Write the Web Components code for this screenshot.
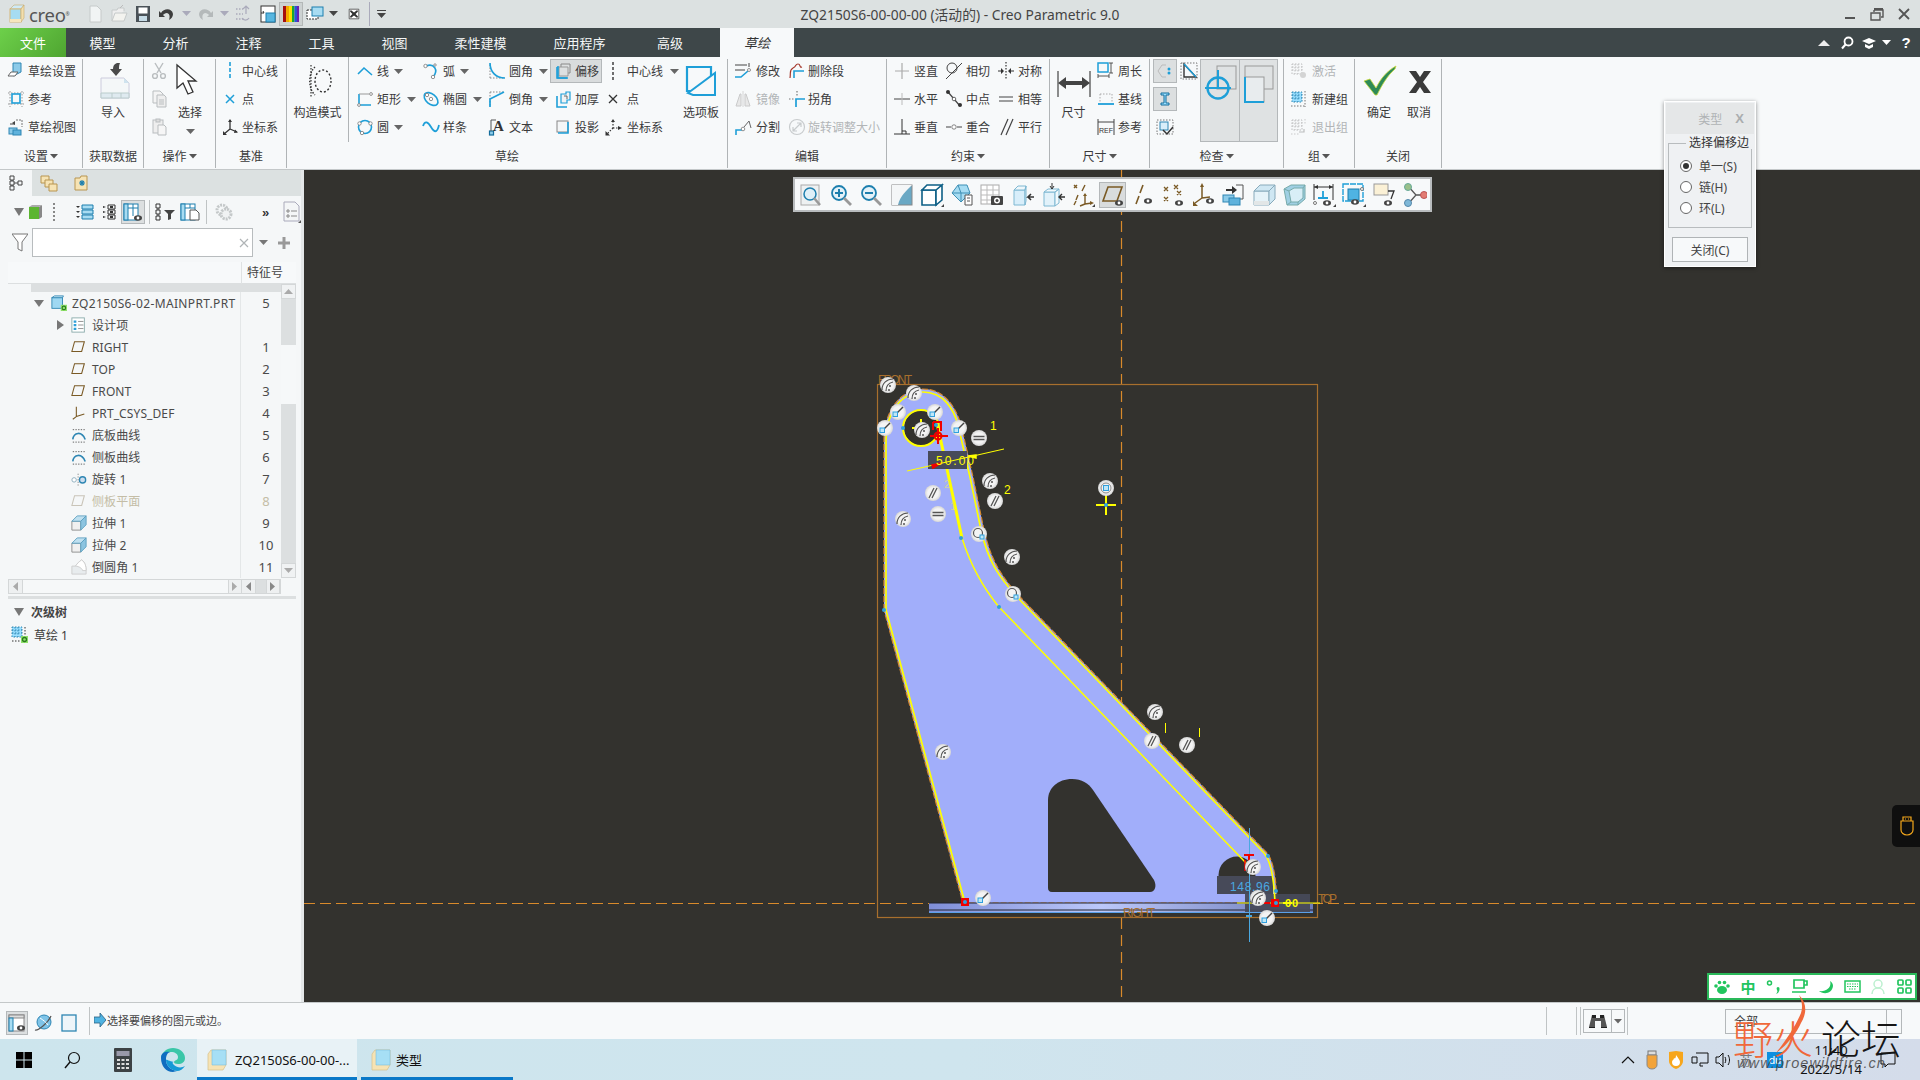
<!DOCTYPE html>
<html>
<head>
<meta charset="utf-8">
<style>
html, body { margin: 0; padding: 0; background: #33322e; }
</style>
</head>
<body>
<creo-window>
	<title-bar></title-bar>
	<ribbon-tabs></ribbon-tabs>
	<ribbon-bar>
		<ribbon-group label="设置" caret w="83">
			<rb-col w="82" p="7">
				<rb-item i="setup">草绘设置</rb-item>
				<rb-item i="ref">参考</rb-item>
				<rb-item i="view">草绘视图</rb-item>
			</rb-col>
		</ribbon-group>
		<ribbon-group label="获取数据" w="61">
			<rb-big i="import" s="36">导入</rb-big>
		</ribbon-group>
		<ribbon-group label="操作" caret w="72">
			<rb-col w="24" p="6">
				<rb-item i="cut"></rb-item>
				<rb-item i="copy"></rb-item>
				<rb-item i="paste"></rb-item>
			</rb-col>
			<rb-big i="cursor" s="34" w="44" caret>选择</rb-big>
		</ribbon-group>
		<ribbon-group label="基准" w="71">
			<rb-col w="70" p="5">
				<rb-item i="cline">中心线</rb-item>
				<rb-item i="cpoint">点</rb-item>
				<rb-item i="csys">坐标系</rb-item>
			</rb-col>
		</ribbon-group>
		<ribbon-group label="草绘" w="441">
			<rb-big i="construct" s="36" w="62" line>构造模式</rb-big>
			<rb-col w="73" p="7">
				<rb-item i="line" drop="5">线</rb-item>
				<rb-item i="rect" drop="6">矩形</rb-item>
				<rb-item i="circle" drop="5">圆</rb-item>
			</rb-col>
			<rb-col w="66" p="0">
				<rb-item i="arc" drop="5">弧</rb-item>
				<rb-item i="ellipse" drop="6">椭圆</rb-item>
				<rb-item i="spline">样条</rb-item>
			</rb-col>
			<rb-col w="62" p="0">
				<rb-item i="fillet" drop="6" g="3">圆角</rb-item>
				<rb-item i="chamfer" drop="6" g="3">倒角</rb-item>
				<rb-item i="text" g="3">文本</rb-item>
			</rb-col>
			<rb-col w="54" p="4">
				<rb-item i="offset" on g="3">偏移</rb-item>
				<rb-item i="thick" g="3">加厚</rb-item>
				<rb-item i="project" g="3">投影</rb-item>
			</rb-col>
			<rb-col w="72" p="0">
				<rb-item i="vdash" g="5" drop="5">中心线</rb-item>
				<rb-item i="xdark" g="5">点</rb-item>
				<rb-item i="csysd" g="5">坐标系</rb-item>
			</rb-col>
			<rb-big i="palette" s="36" w="50">选项板</rb-big>
		</ribbon-group>
		<ribbon-group label="编辑" w="159">
			<rb-col w="60" p="6">
				<rb-item i="modify" g="4">修改</rb-item>
				<rb-item i="mirror" g="4" off>镜像</rb-item>
				<rb-item i="divide" g="4">分割</rb-item>
			</rb-col>
			<rb-col w="99" p="0">
				<rb-item i="delseg" g="2">删除段</rb-item>
				<rb-item i="corner" g="2">拐角</rb-item>
				<rb-item i="rotate" g="2" off>旋转调整大小</rb-item>
			</rb-col>
		</ribbon-group>
		<ribbon-group label="约束" caret w="163">
			<rb-col w="52" p="6" >
				<rb-item i="cvert" g="3">竖直</rb-item>
				<rb-item i="chor" g="3">水平</rb-item>
				<rb-item i="cperp" g="3">垂直</rb-item>
			</rb-col>
			<rb-col w="52" p="6">
				<rb-item i="ctan" g="3">相切</rb-item>
				<rb-item i="cmid" g="3">中点</rb-item>
				<rb-item i="ccoin" g="3">重合</rb-item>
			</rb-col>
			<rb-col w="58" p="6">
				<rb-item i="csym" g="3">对称</rb-item>
				<rb-item i="ceq" g="3">相等</rb-item>
				<rb-item i="cpar" g="3">平行</rb-item>
			</rb-col>
		</ribbon-group>
		<ribbon-group label="尺寸" caret w="100">
			<rb-big i="dim" s="36" w="47">尺寸</rb-big>
			<rb-col w="52" p="0">
				<rb-item i="perim" g="3">周长</rb-item>
				<rb-item i="base" g="3">基线</rb-item>
				<rb-item i="refdim" g="3">参考</rb-item>
			</rb-col>
		</ribbon-group>
		<ribbon-group label="检查" caret w="134">
			<inspect-tools></inspect-tools>
		</ribbon-group>
		<ribbon-group label="组" caret w="71">
			<rb-col w="70" p="6">
				<rb-item i="gact" g="4" off>激活</rb-item>
				<rb-item i="gnew" g="4">新建组</rb-item>
				<rb-item i="gexit" g="4" off>退出组</rb-item>
			</rb-col>
		</ribbon-group>
		<ribbon-group label="关闭" w="87" pad="4">
			<rb-big i="ok" s="34" w="40">确定</rb-big>
			<rb-big i="cancel" s="34" w="40">取消</rb-big>
		</ribbon-group>
	</ribbon-bar>
	<main-area>
		<model-tree></model-tree>
		<graphics-view></graphics-view>
	</main-area>
	<status-bar></status-bar>
	<task-bar></task-bar>
	<select-dialog></select-dialog>
	<ime-bar></ime-bar>
	<forum-mark></forum-mark>
</creo-window>

<script>
const FONT = `'Noto Sans','Noto Sans CJK SC','Liberation Sans',sans-serif`;
const B = '#1e9fd8', K = '#4a4a4a', G = '#b9bdbf', R = '#7a5a25';
const ln = (d, c = B, w = 1.4) => `<path d="${d}" fill="none" stroke="${c}" stroke-width="${w}"/>`;
const dash = (d, c = '#555', w = 1) => `<path d="${d}" fill="none" stroke="${c}" stroke-width="${w}" stroke-dasharray="1.5 1.5"/>`;
const dot = (x, y, r = 1.4, c = '#777') => `<circle cx="${x}" cy="${y}" r="${r}" fill="#fff" stroke="${c}" stroke-width=".8"/>`;
const eye = (x, y) => `<ellipse cx="${x}" cy="${y}" rx="4" ry="2.8" fill="#444"/><circle cx="${x}" cy="${y}" r="1.4" fill="#fff"/>`;

// every icon, viewBox is set by its size group: v = 18 unless listed in BIG
const ICONS = {
	setup: `<path d="M6 1h8v9l-8 4z" fill="#8ccbe9" stroke="#2e86b3"/><path d="M1 14l3-4h7l-3 4z" fill="#fff" stroke="#666"/>`,
	ref: dash('M3 1v16M15 1v16M1 3h16M1 14h16', '#999') + `<rect x="5" y="4" width="8" height="9" fill="none" stroke="${B}" stroke-width="1.6"/>`,
	view: `<path d="M9 2h6v7" fill="none" stroke="#777" stroke-dasharray="2 1"/><path d="M8 3l-3 2 3 2z" fill="#444"/><path d="M3 6l5 0" stroke="#444"/><rect x="2" y="10" width="8" height="6" fill="#8ccbe9" stroke="#2e86b3"/><rect x="6" y="12" width="8" height="5" fill="#5fb2dc" stroke="#2e86b3"/>`,
	cut: ln('M5 1l6 10M13 1l-6 10', G, 1.4) + `<circle cx="5" cy="14" r="2.4" fill="none" stroke="${G}" stroke-width="1.4"/><circle cx="13" cy="14" r="2.4" fill="none" stroke="${G}" stroke-width="1.4"/>`,
	copy: `<path d="M3 1h7l3 3v9H3z" fill="#f4f4f4" stroke="${G}"/><path d="M7 5h7l2 2v10H7z" fill="#eee" stroke="${G}"/>` + ln('M9 10h5M9 12h5M9 14h5', G, 1),
	paste: `<rect x="3" y="2" width="10" height="13" fill="#eee" stroke="${G}"/><rect x="6" y="1" width="4" height="3" fill="#ddd" stroke="${G}"/><path d="M8 7h6l2 2v8H8z" fill="#f6f6f6" stroke="${G}"/>`,
	cline: `<path d="M9 0v18" stroke="${B}" stroke-width="1.6" stroke-dasharray="4 2"/>`,
	cpoint: ln('M5 5l8 8M13 5l-8 8', B, 1.5),
	csys: ln('M9 2v9M9 11l7 3M9 11l-6 5', '#333', 1.3) + `<path d="M7 4l2-3 2 3zM14 11.5l3 3-4 .5zM2 13v4h4z" fill="#333"/>`,
	line: ln('M2 12l6-6 8 7', B, 1.6),
	rect: ln('M3 4v11h12', B, 1.6) + ln('M3 4h10', '#999', 1) + dot(15, 4) + dot(3, 15),
	circle: `<circle cx="9" cy="9" r="6.5" fill="none" stroke="${B}" stroke-width="1.6"/>` + dot(3.5, 5.5, 1.7) + dot(14.5, 5.5, 1.7) + dot(6, 15, 1.7),
	arc: ln('M4 4C12 1 17 8 11 15', B, 1.6) + dot(3.5, 4, 1.7) + dot(11, 15, 1.7) + dot(13, 3, 1.2),
	ellipse: `<ellipse cx="9" cy="9" rx="8" ry="5" transform="rotate(40 9 9)" fill="none" stroke="${B}" stroke-width="1.6"/>` + dot(5, 5, 1.7) + dot(9, 9, 1.7),
	spline: ln('M1 8C3 2 6 4 9 9S15 16 17 7', B, 1.8),
	fillet: dash('M2 16h14M2 16V2', '#888') + ln('M2 1C2 10 8 16 17 16', B, 1.7),
	chamfer: dash('M2 2h14M2 2v14', '#888') + ln('M2 17V9L16 2', B, 1.7),
	text: `<rect x="1.5" y="13" width="4" height="4" fill="#8ccbe9" stroke="#136d9c" stroke-width="1.2"/>` + ln('M3 2h5M3 2v11', '#555', 1) + `<text x="5" y="13" font-family="Liberation Serif" font-weight="bold" font-size="15" fill="#333">A</text>`,
	offset: ln('M3 5v11h10', B, 1.6) + `<path d="M7 2h9v9H7z" fill="#dde0e1" stroke="#888"/><path d="M5 5h9v9H5z" fill="#dde0e1" stroke="#999"/>` + ln('M4 4v12h10', B, 1.6),
	thick: ln('M3 6v11h10', B, 1.6) + `<path d="M7 4h5V2h4v8h-3v3H7z" fill="#f0f3f4" stroke="${B}" stroke-width="1.2"/>` + ln('M10 6h3v3', '#666', 1),
	project: `<rect x="3" y="3" width="11" height="11" fill="#f4f6f7" stroke="#888"/>` + ln('M14 4v11H4', B, 1.6),
	vdash: `<path d="M9 0v18" stroke="#333" stroke-width="1.4" stroke-dasharray="3 2"/>`,
	xdark: ln('M5 5l8 8M13 5l-8 8', '#333', 1.3),
	csysd: dash('M9 3v7M9 10h7M9 10l-6 6', '#333', 1.2) + `<path d="M7 4l2-3 2 3zM14 8l4 2-4 2zM1.500 13v4.500H6z" fill="#333"/>`,
	modify: ln('M1 3h12M15 1v4M1 8h10', '#444', 1) + ln('M1 15h6L14 9', B, 1.6) + dot(15, 8, 1.5),
	mirror: ln('M9 1v16', '#ccc', 1) + `<path d="M6 4l-4 12h5V4zM12 4l4 12h-5V4z" fill="#e3e3e3" stroke="#bbb"/>`,
	divide: ln('M2 17v-5h6', B, 1.6) + ln('M10 9l5-6 2 7', '#666', 1) + dot(9, 11, 1.8),
	delseg: ln('M6 16V9h10', B, 1.6) + ln('M2 16C3 10 1 8 5 6s2-4 5-4 1 4 4 3', '#a5382c', 1.2),
	corner: ln('M8 17V9h9', B, 1.7) + dash('M9 1v6M1 9h6', '#777', 1.2),
	rotate: `<circle cx="9" cy="9" r="7.5" fill="none" stroke="${G}" stroke-width="1.2"/>` + ln('M5 13l8-8M5 9v4h4M9 5h4v4', G, 1.2),
	cvert: ln('M9 1v16', '#aaa', 1.2) + ln('M2 9h14', '#aaa', 1),
	chor: ln('M1 9h16', '#444', 1) + ln('M9 3v12', '#bbb', 1),
	cperp: ln('M1 16h16M9 1v15', '#333', 1) + ln('M9 13h4v3', '#333', 1),
	ctan: `<circle cx="7" cy="6" r="5" fill="none" stroke="#444"/>` + ln('M1 17L17 1', '#444', 1),
	cmid: ln('M3 2l12 14', '#444', 1.2) + `<circle cx="3" cy="2" r="2" fill="#333"/><circle cx="15" cy="15" r="2" fill="#333"/>` + dot(9, 9, 1.8, '#444'),
	ccoin: ln('M1 9h5M12 9h5', '#444', 1.2) + dot(9, 9, 2.2, '#666'),
	csym: dash('M9 0v18', '#333', 1.2) + `<path d="M1 9h4M13 9h4" stroke="#333"/><path d="M4 6l3 3-3 3zM14 6l-3 3 3 3z" fill="#333"/>`,
	ceq: ln('M2 7h14M2 11h14', '#444', 1.2),
	cpar: ln('M4 17L11 1M9 17L16 1', '#444', 1.2),
	perim: `<rect x="1" y="1" width="10" height="9" fill="none" stroke="${B}" stroke-width="1.5"/>` + ln('M14 1v10M12 1h4M12 11h4M1 14h11M1 12v4M12 12v4', '#444', .9),
	base: dash('M3 4h12M3 4v9M15 4v9', '#aaa') + ln('M1 14h16', B, 1.8),
	refdim: ln('M1 1v16M17 1v16M1 4h16', '#444', 1) + `<text x="2" y="15" font-family="Liberation Sans" font-size="7" fill="#333">REF</text>`,
	gact: dash('M2 2h10v10H2zM2 5h10M2 8h10M5 2v10M8 2v10', '#aaa') + `<circle cx="13" cy="13" r="3" fill="#c8c8c8"/>`,
	gnew: `<rect x="2" y="2" width="10" height="10" fill="#9adfff"/>` + dash('M2 2h10v10H2zM2 5h10M2 8h10M5 2v10M8 2v10', '#2e86b3') + dash('M15 1v16M1 16h14', '#777'),
	gexit: dash('M2 2h10v10H2zM2 5h10M2 8h10M5 2v10M8 2v10', '#aaa') + ln('M9 14h5v-3', '#aaa', 1.2) + dash('M15 1v6M1 16h8', '#bbb'),
	// big ribbon icons
	import: `<path d="M6 15h23l5 5v15H6z" fill="#f4f7f8" stroke="#ccd"/><path d="M29 15l5 5h-5z" fill="#cfe3ee"/><path d="M6 35v-5h28v5z" fill="#dfeaf0" stroke="#bcc"/><path d="M17 30v5M26 30v5" stroke="#bcc"/><path d="M22 0c-3 1-4 3-4 6h-3l6 7 6-7h-3c0-2 0-4 1-6z" fill="#4a4a4a"/>`,
	cursor: `<path d="M4 1l0 23 6-5 5 11 5-2-5-11h8z" fill="#fff" stroke="#333" stroke-width="1.300"/>`,
	construct: dash('M15 4C8 10 8 26 15 32', '#333', 1.4) + dash('M11 2v32', '#333', 1.2) + `<ellipse cx="23" cy="18" rx="8" ry="11" fill="none" stroke="#333" stroke-width="1.400" stroke-dasharray="2 2"/>`,
	palette: ln('M4 4h24v24H4z', B, 2.2) + `<path d="M5 30L32 10v22H10z" fill="#f7f9fa" stroke="${B}" stroke-width="2"/>`,
	dim: ln('M2 8v26M34 8v26', '#444', 1.2) + `<path d="M2 20l8-6v4h16v-4l8 6-8 6v-4H10v4z" fill="#444"/>`,
	ok: `<path d="M2 17l6-2 6 9C19 14 25 7 34 2l-1 3C25 12 20 21 15 31h-2z" fill="#2e8b57" stroke="#c9d93a" stroke-width=".8"/>`,
	cancel: `<path d="M7 7h7l4 6 4-6h7l-8 11 8 11h-7l-4-6-4 6H7l8-11z" fill="#3a3a3a"/>`,
	// tree icons
	plane: ln('M4 3h11l-3 11H1z', R, 1.2),
	planed: ln('M4 3h11l-3 11H1z', '#c9c4b8', 1.2),
	tcsys: ln('M6 2v11M6 13l9-3M6 13l-4 3', R, 1.2),
	curve: ln('M2 14C3 6 12 4 16 14', '#2e86b3', 1.8) + dash('M2 3h14M2 17h14', '#555'),
	revolve: `<circle cx="3.500" cy="10" r="2.500" fill="#fff" stroke="#8ab"/><circle cx="13" cy="10" r="3.500" fill="#cde" stroke="#2e86b3" stroke-width="1.500"/>` + dash('M8 3v14', '#888'),
	extrude: `<path d="M1 7h10v10H1z" fill="#f0f0f0" stroke="#888"/><path d="M1 7l6-6h10L11 7z" fill="#bfe0f0" stroke="#5a9fc0"/><path d="M11 7l6-6v10l-6 6z" fill="#8cc4e0" stroke="#5a9fc0"/>`,
	tround: `<path d="M1 17V8h4C7 5 9 3 12 1c4 3 5 7 5 12v4z" fill="#e8ecee" stroke="#ccc"/><path d="M5 8c2-3 4-5 7-7 4 3 5 7 5 12h-4C13 11 9 8 5 8z" fill="#fff" stroke="#ccc"/>`,
	items: `<rect x="1" y="1" width="14" height="16" fill="#fff" stroke="#8aa"/><path d="M3 4h3v2.500H3zM3 8h3v2.500H3zM3 12h3v2.500H3z" fill="#2e9fd8"/>` + ln('M8 5h6M8 9h6M8 13h6', '#888', 1),
	part: `<rect x="1" y="3" width="12" height="12" fill="#9fd8f2" stroke="#2e86b3"/><path d="M1 3l3-2h10l-1 2z" fill="#cfeaf7" stroke="#2e86b3"/><rect x="11" y="11" width="7" height="7" fill="#8fe06a"/><circle cx="14.500" cy="14.500" r="2" fill="none" stroke="#2a7a20" stroke-width="1.300"/>`,
	sketch: `<rect x="1" y="1" width="10" height="10" fill="#9adfff"/>` + dash('M1 1h10v10H1zM1 4h10M1 7h10M4 1v10M7 1v10', '#2e86b3') + dash('M14 1v16M1 15h13', '#333') + `<rect x="10" y="10" width="7" height="7" fill="#8fe06a"/><circle cx="13.500" cy="13.500" r="2" fill="none" stroke="#2a7a20" stroke-width="1.300"/>`
};

class Ico extends HTMLElement {
	connectedCallback() {
		const n = this.getAttribute('n'), s = this.getAttribute('s') || 18, v = this.getAttribute('v') || s;
		this.attachShadow({ mode: 'open' }).innerHTML = `<style>:host{display:inline-flex;flex:none;width:${s}px;height:${s}px}svg{display:block;overflow:visible}</style><svg width="${s}" height="${s}" viewBox="0 0 ${v} ${v}">${ICONS[n] || ''}</svg>`;
	}
}
customElements.define('c-ico', Ico);

class CreoWindow extends HTMLElement {
	constructor() {
		super();
		this.attachShadow({ mode: 'open' }).innerHTML = `<style>
			:host { display: flex; flex-direction: column; position: relative; width: 1920px; height: 1080px; overflow: hidden; font: 12px ${FONT}; color: #3a3a3a; }
		</style><slot></slot>`;
	}
}

class TitleBar extends HTMLElement {
	constructor() {
		super();
		const q = (w, svg) => `<span class="q" style="width:${w}px">${svg}</span>`;
		const svg = (b, w = 20) => `<svg width="${w}" height="${w}" viewBox="0 0 20 20">${b}</svg>`;
		const drop = `<svg width="9" height="6" viewBox="0 0 9 6"><path d="M0 0h9L4.500 5z" fill="#aab"/></svg>`;
		const dropK = `<svg width="9" height="6" viewBox="0 0 9 6"><path d="M0 0h9L4.500 5z" fill="#444"/></svg>`;
		this.attachShadow({ mode: 'open' }).innerHTML = `<style>
			:host { display: grid; grid-template-columns: 1fr auto 1fr; align-items: center; height: 28px; background: #dce1e1; flex: none; }
			.left { display: flex; align-items: center; height: 28px; }
			.logo { display: flex; align-items: center; width: 83px; box-sizing: border-box; padding-left: 8px; gap: 3px; font: 18.500px 'Noto Sans',sans-serif; color: #555; letter-spacing: -.3px; }
			.logo sup { font-size: 5px; margin-left: -3px; }
			.q { display: flex; justify-content: center; align-items: center; height: 28px; flex: none; }
			.on { height: 24px; box-sizing: border-box; background: #cdd2d2; border: 1px solid #b4b8b8; }
			.sep { width: 1px; height: 24px; background: #aab; margin-left: 3px; }
			.title { font-size: 13.800px; color: #444; white-space: nowrap; }
			.win { display: flex; justify-content: flex-end; align-items: center; gap: 11px; padding-right: 8px; }
			.win svg { display: block; }
		</style>
		<div class="left">
			<span class="logo"><svg width="18" height="20" viewBox="0 0 18 20"><path d="M2 5l4-4h10l-3 4z" fill="#cfeaf7" stroke="#c8a86a" stroke-width=".6"/><rect x="2" y="5" width="11" height="13" fill="#a6dcf2" stroke="#d6b878"/><path d="M13 5l3-4v13l-3 4z" fill="#f2dfae" stroke="#c8a86a" stroke-width=".6"/><path d="M2 15h11v3H2z" fill="#f6e6bd"/></svg><span>creo</span><sup>®</sup></span>
			${q(24, svg(`<path d="M5 2h7l4 4v12H5z" fill="#f1f4f4" stroke="#c6caca"/>`))}
			${q(24, svg(`<path d="M3 17V6h5l1-2h6v3" fill="#eee" stroke="#c6caca"/><path d="M3 17l3-8h12l-3 8z" fill="#f3f3ef" stroke="#c6caca"/><path d="M11 4l3-3" stroke="#bbb"/>`))}
			${q(24, svg(`<path d="M3 2h14v16H3z" fill="#4a5258"/><rect x="5.500" y="3.500" width="9" height="6" fill="#fff"/><rect x="6" y="12" width="8" height="5" fill="#c6dbe6"/>`))}
			${q(24, svg(`<path d="M4 9C7 4 15 4 16 10c0 3-2 5-4 6 1-3 1-6-2-7-2 0-3 1-4 2l2 2H2V7z" fill="#3d3d3d"/>`))}
			${q(14, drop)}
			${q(24, svg(`<path d="M16 9C13 4 5 4 4 10c0 3 2 5 4 6-1-3-1-6 2-7 2 0 3 1 4 2l-2 2h6V7z" fill="#b4b9ba"/>`))}
			${q(14, drop)}
			${q(24, svg(dash('M3 5h7M3 10h7M3 15h8', '#aab', 1.500) + `<path d="M13 2v8M10 5l3-3 3 3M16 14a4 4 0 0 1-7 0" fill="none" stroke="#aab" stroke-width="1.200"/>`))}
			${q(24, svg(`<rect x="4" y="2" width="14" height="16" fill="#fff" stroke="#333"/><rect x="9" y="9" width="9" height="9" fill="#58b6e0" stroke="#1d7fae"/><path d="M4 9h3l-1-2" stroke="#333" fill="none"/>`))}
			<span class="q on" style="width:24px"><svg width="16" height="16" viewBox="0 0 16 16"><path d="M0 0h3v16H0z" fill="#a60f10"/><path d="M3 0h3v16H3z" fill="#f5a800"/><path d="M6 0h3v16H6z" fill="#ffe000"/><path d="M9 0h2.500v16H9z" fill="#1aa72e"/><path d="M11.500 0H14v16h-2.500z" fill="#2a52d8"/><path d="M14 0h2v16h-2z" fill="#6a1fb0"/></svg></span>
			${q(24, svg(`<rect x="2" y="6" width="11" height="9" fill="#fff" stroke="#333" stroke-dasharray="2 1"/><rect x="7" y="3" width="11" height="9" fill="#a8dcf2" stroke="#1d7fae"/>`))}
			${q(12, dropK)}
			<span style="width:3px"></span>
			${q(24, svg(`<path d="M4 4h12v12H4z" fill="#fff" stroke="#444"/><path d="M6 5l4 3 4-3 1 2-3 3 3 3-1 2-4-3-4 3-1-2 3-3-3-3z" fill="#333"/>`, 16))}
			<span class="sep"></span>
			${q(22, `<svg width="9" height="9" viewBox="0 0 9 9"><path d="M0 0h9v1H0zM0 3h9L4.500 8z" fill="#444"/></svg>`)}
		</div>
		<div class="title">ZQ2150S6-00-00-00 (活动的) - Creo Parametric 9.0</div>
		<div class="win">
			<svg width="16" height="14" viewBox="0 0 16 14"><path d="M3 10h10v2H3z" fill="#555"/></svg>
			<svg width="16" height="14" viewBox="0 0 16 14"><path d="M5 3h9v7h-2M2 6h9v7H2zM5 3v2" fill="none" stroke="#555" stroke-width="1.400"/><path d="M5 1h9v2H5z" fill="#555"/></svg>
			<svg width="16" height="14" viewBox="0 0 16 14"><path d="M3 2l10 10M13 2L3 12" stroke="#555" stroke-width="1.800"/></svg>
		</div>`;
	}
}

class RibbonTabs extends HTMLElement {
	constructor() {
		super();
		const tabs = [['文件', 66, 'file'], ['模型', 73], ['分析', 73], ['注释', 73], ['工具', 73], ['视图', 73], ['柔性建模', 99], ['应用程序', 99], ['高级', 82], ['', 9], ['草绘', 74, 'cur']];
		this.attachShadow({ mode: 'open' }).innerHTML = `<style>
			:host { display: flex; height: 29px; background: #3e4749; color: #f4f6f6; font-size: 13px; flex: none; }
			.t { display: flex; align-items: center; justify-content: center; flex: none; }
			.file { background: linear-gradient(135deg, #6dd04a, #4fa531); color: #fff; }
			.cur { background: #f7f9fa; color: #333; font-style: italic; }
			.r { margin-left: auto; display: flex; align-items: center; gap: 0; padding-right: 4px; }
			.r span { display: flex; justify-content: center; width: 23px; }
		</style>` + tabs.map(t => `<div class="t ${t[2] || ''}" style="width:${t[1]}px">${t[0]}</div>`).join('') + `
		<div class="r">
			<span><svg width="12" height="8" viewBox="0 0 12 8"><path d="M0 7l6-6 6 6z" fill="#eee"/></svg></span>
			<span><svg width="14" height="14" viewBox="0 0 14 14"><circle cx="8.500" cy="5.500" r="4" fill="none" stroke="#fff" stroke-width="1.800"/><path d="M5.500 8.500L2 12.500" stroke="#fff" stroke-width="2"/></svg></span>
			<span style="width:18px;justify-content:flex-end"><svg width="14" height="14" viewBox="0 0 14 14"><path d="M0 5l7-3 7 3-7 3z" fill="#fff"/><path d="M3 8v3l4 2 4-2V8L7 10z" fill="#fff"/></svg></span>
			<span style="width:20px"><svg width="9" height="6" viewBox="0 0 9 6"><path d="M0 0h9L4.500 5z" fill="#fff"/></svg></span>
			<span style="width:20px;font:bold 15px 'Liberation Sans';color:#fff">?</span>
		</div>`;
	}
}

class RibbonBar extends HTMLElement {
	constructor() {
		super();
		this.attachShadow({ mode: 'open' }).innerHTML = `<style>
			:host { display: flex; height: 113px; box-sizing: border-box; background: #f7f9fa; border-bottom: 1px solid #c4c8c9; flex: none; }
		</style><slot></slot>`;
	}
}

class RibbonGroup extends HTMLElement {
	connectedCallback() {
		const w = this.getAttribute('w'), pad = this.getAttribute('pad') || 0;
		const caret = this.hasAttribute('caret') ? `<svg width="8" height="5" viewBox="0 0 8 5" style="margin-left:2px"><path d="M0 0h8L4 4.500z" fill="#555"/></svg>` : '';
		this.attachShadow({ mode: 'open' }).innerHTML = `<style>
			:host { display: flex; flex-direction: column; flex: none; box-sizing: border-box; width: ${w}px; height: 109px; margin-top: 2px; border-right: 1px solid #b0b4b6; }
			.body { display: flex; height: 87px; margin-top: -2px; padding-left: ${pad}px; }
			.label { display: flex; align-items: center; justify-content: center; height: 24px; color: #3a3a3a; white-space: nowrap; }
		</style><div class="body"><slot></slot></div><div class="label">${this.getAttribute('label')}${caret}</div>`;
	}
}

class RbCol extends HTMLElement {
	connectedCallback() {
		this.attachShadow({ mode: 'open' }).innerHTML = `<style>
			:host { display: flex; flex-direction: column; flex: none; box-sizing: border-box; width: ${this.getAttribute('w')}px; padding-left: ${this.getAttribute('p') || 0}px; }
		</style><slot></slot>`;
	}
}

class RbItem extends HTMLElement {
	connectedCallback() {
		const off = this.hasAttribute('off'), on = this.hasAttribute('on'), drop = this.getAttribute('drop');
		const car = drop ? `<svg width="9" height="5" viewBox="0 0 9 5" style="margin-left:${drop - 3}px;flex:none"><path d="M0 0h9L4.500 5z" fill="#666"/></svg>` : '';
		this.attachShadow({ mode: 'open' }).innerHTML = `<style>
			:host { display: flex; align-items: center; height: 28px; gap: ${this.getAttribute('g') || 3}px; white-space: nowrap; color: ${off ? '#b2b5b7' : '#3a3a3a'}; position: relative; }
			.box { position: absolute; left: -4px; top: 2px; width: 52px; height: 24px; box-sizing: border-box; background: #d9dcdd; border: 1px solid #b4b8ba; }
			c-ico { position: relative; ${off ? 'opacity:.75;' : ''} }
			span { position: relative; }
		</style>${on ? '<div class="box"></div>' : ''}<c-ico n="${this.getAttribute('i')}"></c-ico><span><slot></slot></span>${car}`;
	}
}

class RbBig extends HTMLElement {
	connectedCallback() {
		const s = this.getAttribute('s') || 36, w = this.getAttribute('w') || 60;
		const border = this.hasAttribute('line') ? `.wrap{border-right:1px solid #b0b4b6;height:85px;box-sizing:border-box}` : '';
		const car = this.hasAttribute('caret') ? `<svg width="9" height="5" viewBox="0 0 9 5" style="margin-top:7px"><path d="M0 0h9L4.500 5z" fill="#666"/></svg>` : '';
		this.attachShadow({ mode: 'open' }).innerHTML = `<style>
			:host { display: block; flex: 1 0 ${w}px; max-width: ${this.getAttribute('w') ? w + 'px' : 'none'}; }
			.wrap { display: flex; flex-direction: column; align-items: center; white-space: nowrap; }
			.i { display: flex; align-items: center; justify-content: center; height: 47px; }
			.t { line-height: 18px; }
			${border}
		</style><div class="wrap"><div class="i"><c-ico n="${this.getAttribute('i')}" s="${s}"></c-ico></div><div class="t"><slot></slot></div>${car}</div>`;
	}
}

class InspectTools extends HTMLElement {
	constructor() {
		super();
		this.attachShadow({ mode: 'open' }).innerHTML = `<style>
			:host { display: flex; padding: 2px 0 0 3px; gap: 0; }
			.col { display: flex; flex-direction: column; gap: 4px; width: 24px; }
			.s { display: flex; align-items: center; justify-content: center; box-sizing: border-box; width: 24px; height: 24px; }
			.s.on { background: #dcdfe0; border: 1px solid #b4b8ba; }
			.c2 { width: 24px; margin-right: 0; }
			.c2 .s { height: 24px; }
			.tog { box-sizing: border-box; width: 40px; height: 83px; background: #dfe2e3; border: 1px solid #b4b8ba; margin-left: -1px; padding: 4px 0 0 3px; }
		</style>
		<div class="col">
			<div class="s on"><svg width="18" height="18" viewBox="0 0 18 18"><path d="M6 3l-4 6 4 6" fill="none" stroke="#bbb"/><path d="M6 3h4M6 15h4" stroke="#bbb"/><circle cx="13" cy="7" r="1.500" fill="${B}"/><circle cx="13" cy="11" r="1.500" fill="${B}"/></svg></div>
			<div class="s on"><svg width="18" height="18" viewBox="0 0 18 18"><path d="M5 3h8v2H10v8h3v2H5v-2h3V5H5z" fill="#9adfff" stroke="#136d9c"/></svg></div>
			<div class="s"><svg width="18" height="18" viewBox="0 0 18 18">${dash('M1 2h16v14H1z', '#777')}<rect x="4" y="4" width="8" height="8" fill="#d8eefa" stroke="#2e86b3"/><path d="M7 12l4 4 6-7" fill="none" stroke="#333" stroke-width="1.500"/></svg></div>
		</div>
		<div class="col c2">
			<div class="s"><svg width="18" height="18" viewBox="0 0 18 18">${dash('M1 1h16v16H1z', '#777')}<path d="M4 2v13h12z" fill="none" stroke="#333" stroke-width="1.400"/><path d="M4 2L16 15" stroke="#1e9fd8" stroke-width="1.400"/></svg></div>
		</div>
		<div class="tog"><svg width="34" height="40" viewBox="0 0 34 40"><rect x="13" y="2" width="19" height="23" fill="none" stroke="#999"/><circle cx="14" cy="24" r="10.500" fill="none" stroke="${B}" stroke-width="2.400"/><path d="M14 6v18M1 24h26" stroke="${B}" stroke-width="2"/></svg></div>
		<div class="tog" style="width:39px"><svg width="34" height="40" viewBox="0 0 34 40"><rect x="2" y="2" width="28" height="23" fill="none" stroke="#999"/><rect x="2" y="13" width="19" height="25" fill="#e8ecee" stroke="#999"/><path d="M2 13v25h19" fill="none" stroke="${B}" stroke-width="2"/></svg></div>`;
	}
}

class MainArea extends HTMLElement {
	constructor() {
		super();
		this.attachShadow({ mode: 'open' }).innerHTML = `<style>
			:host { display: flex; height: 832px; flex: none; }
		</style><slot></slot>`;
	}
}

class TreeRow extends HTMLElement {
	connectedCallback() {
		const lvl = +(this.getAttribute('lvl') || 1), dim = this.hasAttribute('dim'), arrow = this.getAttribute('arrow');
		const tri = arrow === 'down' ? `<path d="M1 3h10L6 10z" fill="#777"/>` : arrow === 'right' ? `<path d="M3 1v10l7-5z" fill="#777"/>` : '';
		this.attachShadow({ mode: 'open' }).innerHTML = `<style>
			:host { display: grid; grid-template-columns: 241px 40px; height: 22px; font-size: 12px; color: ${dim ? '#c4bda6' : '#4a4a4a'}; }
			.name { display: flex; align-items: center; padding-left: ${lvl ? 54 : 33}px; border-right: 1px solid #e4e7e8; box-sizing: border-box; white-space: nowrap; }
			.a { width: 12px; height: 12px; flex: none; margin-right: ${lvl ? 5 : 6}px; }
			.t { margin-left: 5px; letter-spacing: ${lvl ? .1 : .35}px; }
			.n { box-sizing: border-box; padding-left: 10px; text-align: center; line-height: 22px; font-size: 13px; }
		</style><div class="name"><svg class="a" viewBox="0 0 12 12">${tri}</svg><c-ico n="${this.getAttribute('i')}" s="16" v="18"></c-ico><span class="t"><slot></slot></span></div><div class="n">${this.getAttribute('n')}</div>`;
	}
}

class ModelTree extends HTMLElement {
	constructor() {
		super();
		this.attachShadow({ mode: 'open' }).innerHTML = `<style>
			:host { display: flex; flex-direction: column; width: 304px; box-sizing: border-box; border-right: 3px solid #e4e7e8; background: #f5f7f8; flex: none; height: 832px; position: relative; }
			.ptabs { display: flex; height: 26px; background: #dce1e1; flex: none; }
			.ptabs span { display: flex; align-items: center; justify-content: center; width: 32px; margin-right: 0; }
			.ptabs .cur { background: #f5f7f8; }
			.tools { display: flex; align-items: center; height: 32px; flex: none; padding-left: 13px; }
			.b { display: flex; align-items: center; justify-content: center; width: 24px; height: 24px; flex: none; box-sizing: border-box; }
			.on { background: #dcdfe0; border: 1px solid #b4b8ba; }
			.vs { width: 1px; height: 24px; background: #bfc3c4; margin: 0 7px 0 4px; }
			.filter { display: flex; align-items: center; height: 29px; flex: none; }
			.filter input { box-sizing: border-box; width: 221px; height: 29px; border: 1px solid #b8bcbe; background: #fff; margin-left: 5px; }
			.head { display: grid; grid-template-columns: 233px 55px; margin: 5px 0 0 8px; height: 22px; width: 288px; flex: none; background: #f7f9fa; line-height: 22px; border-bottom: 1px solid #dcdfe0; box-sizing: border-box; }
			.head b { font-weight: normal; border-left: 1px solid #dfe2e3; text-align: left; padding-left: 5px; color: #444; }
			.mid { display: flex; height: 294px; flex: none; margin-left: 0; }
			.rows { width: 281px; flex: none; }
			.clip { height: 8px; margin-left: 31px; background: #dcdfe0; }
			.vbar { width: 15px; margin-left: 0; background: #dcdfe0; display: flex; flex-direction: column; }
			.vbar i { display: flex; justify-content: center; align-items: center; height: 15px; background: #f0f2f3; border: 1px solid #d4d7d8; box-sizing: border-box; }
			.vbar .th { height: 59px; margin-top: 46px; background: #f6f8f9; flex: none; margin-bottom: auto; }
			.hbar { display: flex; height: 15px; margin: 1px 0 0 8px; width: 273px; flex: none; border: 1px solid #d4d7d8; box-sizing: border-box; background: #f6f8f9; }
			.hbar i { display: flex; justify-content: center; align-items: center; width: 14px; border-right: 1px solid #d4d7d8; background: #eef0f1; box-sizing: border-box; }
			.sec { height: 3px; background: #dcdfe0; margin: 2px 8px 0; flex: none; width: 288px; }
			.sub { display: flex; align-items: center; height: 25px; padding-left: 13px; gap: 6px; color: #444; font-weight: 700; flex: none; }
			.subrow { display: flex; align-items: center; height: 22px; padding-left: 11px; gap: 5px; flex: none; }
		</style>
		<div class="ptabs">
			<span class="cur"><svg width="14" height="16" viewBox="0 0 14 16"><path d="M1 1h4v4H1zM1 6h4v4H1zM1 11h4v4H1zM9 6h4v4H9z" fill="none" stroke="#444"/><path d="M3 5v1M3 10v1M5 8h4" stroke="#444"/></svg></span>
			<span style="margin-left:1px"><svg width="18" height="18" viewBox="0 0 18 18"><path d="M1 2h8v7H1z" fill="#f6e3b4" stroke="#b89550"/><path d="M5 6h8v7H5z" fill="#f6e3b4" stroke="#b89550"/><path d="M9 10h8v7H9z" fill="#f6e3b4" stroke="#b89550"/></svg></span>
			<span style="margin-left:1px"><svg width="16" height="16" viewBox="0 0 16 16"><path d="M1 3h5l1-2h6v14H1z" fill="#f6e3b4" stroke="#b89550"/><path d="M8 5v6M5 8h6M6 6l4 4M10 6l-4 4" stroke="#1d7fae" stroke-width="1.100"/></svg></span>
		</div>
		<div class="tools">
			<svg width="12" height="10" viewBox="0 0 12 10" style="margin-right:3px"><path d="M1 1h10L6 9z" fill="#777"/></svg>
			<svg width="18" height="16" viewBox="0 0 18 16"><rect x="1" y="3" width="10" height="12" fill="#5cb531"/><path d="M11 3l3-2v12l-3 2z" fill="#888"/><path d="M1 3l3-2h10l-3 2z" fill="#aaa"/></svg>
			<svg width="6" height="20" viewBox="0 0 6 20" style="margin:0 16px 0 5px"><path d="M3 1v18" stroke="#888" stroke-width="2" stroke-dasharray="2 2"/></svg>
			<span class="b" style="margin-right:0"><svg width="18" height="16" viewBox="0 0 18 16"><path d="M6 1h11v4H6zM6 6h11v4H6zM6 11h11v4H6z" fill="#a8dcf2" stroke="#1d7fae"/><path d="M0 2h4L2 4zM0 7h4L2 9zM0 12h4l-2 2z" fill="#333"/></svg></span>
			<span class="b"><svg width="16" height="16" viewBox="0 0 16 16"><path d="M7 1h7v4H7zM7 6h7v4H7zM7 11h7v4H7z" fill="none" stroke="#333"/><path d="M9 2h3v2H9zM9 7h3v2H9zM9 12h3v2H9z" fill="#333"/><path d="M2 2l3 1-3 1zM2 7l3 1-3 1zM2 12l3 1-3 1z" fill="#333"/></svg></span>
			<span class="b on" style="margin-left:0"><svg width="20" height="20" viewBox="0 0 20 20"><rect x="1" y="2" width="14" height="16" fill="#fff" stroke="#1d7fae"/><rect x="1" y="2" width="4" height="16" fill="#a8dcf2" stroke="#1d7fae"/><path d="M5 6h10M10 2v12" stroke="#1d7fae"/>${eye(15, 16)}</svg></span>
			<span class="vs"></span>
			<span class="b" style="margin-left:-3px"><svg width="22" height="18" viewBox="0 0 22 18"><path d="M1 1h4v4H1zM1 7h4v4H1zM1 13h4v4H1z" fill="none" stroke="#333"/><path d="M3 5v2M3 11v2" stroke="#333"/><path d="M9 7h11l-4 4v5l-3 1v-6z" fill="#444"/></svg></span>
			<span class="b"><svg width="20" height="18" viewBox="0 0 20 18"><rect x="1" y="1" width="14" height="16" fill="#fff" stroke="#1d7fae"/><rect x="1" y="1" width="4" height="16" fill="#a8dcf2" stroke="#1d7fae"/><path d="M5 5h10M10 1v4" stroke="#1d7fae"/><path d="M10 7h6l3 3v7h-9z" fill="#fff" stroke="#555"/></svg></span>
			<span class="vs" style="margin:0 5px 0 4px"></span>
			<span class="b"><svg width="18" height="18" viewBox="0 0 18 18"><circle cx="7" cy="7" r="5" fill="none" stroke="#c4c8c9" stroke-width="3" stroke-dasharray="2 1"/><circle cx="11" cy="11" r="5" fill="#f0f2f3" stroke="#c4c8c9" stroke-width="3" stroke-dasharray="2 1"/></svg></span>
			<span style="font:bold 13px 'Liberation Sans';margin-left:26px;color:#333;width:23px">»</span>
			<svg width="18" height="22" viewBox="0 0 18 22" style="margin-left:-2px"><path d="M1 1h11l4 4v15H1z" fill="#f4f6f7" stroke="#aab"/><path d="M4 9h2v2H4zM4 14h2v2H4zM8 10h6M8 15h6" stroke="#888" fill="none"/><path d="M18 22v-3l-3 3z" fill="#555"/></svg>
		</div>
		<div class="filter">
			<svg width="16" height="20" viewBox="0 0 16 20" style="margin-left:12px;margin-right:-1px;width:16px"><path d="M0 1h16l-6 8v9l-4-2V9z" fill="#fff" stroke="#777"/></svg>
			<input tabindex="-1"><svg width="10" height="10" viewBox="0 0 10 10" style="margin-left:-14px;position:relative"><path d="M1 1l8 8M9 1l-8 8" stroke="#b0b4b6" stroke-width="1.200"/></svg>
			<svg width="9" height="6" viewBox="0 0 9 6" style="margin-left:10px"><path d="M0 0h9L4.500 5z" fill="#777"/></svg>
			<svg width="12" height="12" viewBox="0 0 12 12" style="margin-left:10px"><path d="M4.500 0h3v4.500H12v3H7.500V12h-3V7.500H0v-3h4.500z" fill="#999"/></svg>
		</div>
		<div class="head"><span></span><b>特征号</b></div>
		<div class="mid">
			<div class="rows">
				<div class="clip"></div>
				<tree-row lvl="0" arrow="down" i="part" n="5">ZQ2150S6-02-MAINPRT.PRT</tree-row>
				<tree-row arrow="right" i="items" n="&nbsp;">设计项</tree-row>
				<tree-row i="plane" n="1">RIGHT</tree-row>
				<tree-row i="plane" n="2">TOP</tree-row>
				<tree-row i="plane" n="3">FRONT</tree-row>
				<tree-row i="tcsys" n="4">PRT_CSYS_DEF</tree-row>
				<tree-row i="curve" n="5">底板曲线</tree-row>
				<tree-row i="curve" n="6">侧板曲线</tree-row>
				<tree-row i="revolve" n="7">旋转 1</tree-row>
				<tree-row i="planed" dim n="8">侧板平面</tree-row>
				<tree-row i="extrude" n="9">拉伸 1</tree-row>
				<tree-row i="extrude" n="10">拉伸 2</tree-row>
				<tree-row i="tround" n="11">倒圆角 1</tree-row>
			</div>
			<div class="vbar">
				<i><svg width="9" height="6" viewBox="0 0 9 6"><path d="M0 5h9L4.500 0z" fill="#aaa"/></svg></i>
				<div class="th"></div>
				<i><svg width="9" height="6" viewBox="0 0 9 6"><path d="M0 0h9L4.500 5z" fill="#aaa"/></svg></i>
			</div>
		</div>
		<div class="hbar">
			<i><svg width="6" height="9" viewBox="0 0 6 9"><path d="M5 0v9L0 4.500z" fill="#aaa"/></svg></i>
			<span style="flex:1"></span>
			<i style="border-left:1px solid #d4d7d8;margin-right:0"><svg width="6" height="9" viewBox="0 0 6 9"><path d="M0 0v9l5-4.500z" fill="#aaa"/></svg></i>
			<i style="width:14px"><svg width="6" height="9" viewBox="0 0 6 9"><path d="M5 0v9L0 4.500z" fill="#888"/></svg></i>
			<span style="width:10px;background:#dcdfe0"></span>
			<i style="border-left:1px solid #d4d7d8;width:14px"><svg width="6" height="9" viewBox="0 0 6 9"><path d="M0 0v9l5-4.500z" fill="#888"/></svg></i>
		</div>
		<div class="sec"></div>
		<div class="sub"><svg width="12" height="10" viewBox="0 0 12 10"><path d="M1 1h10L6 9z" fill="#777"/></svg>次级树</div>
		<div class="subrow"><c-ico n="sketch" s="18"></c-ico><span>草绘 1</span></div>`;
	}
}

class GraphicsView extends HTMLElement {
	constructor() {
		super();
		const C = '#33322e', O = '#d98a2b', OB = '#a86f2d', Y = '#ffff00', RED = '#f00000', DB = '#2f9fdd';
		const outline = 'M884 610L884 440C884 412 900 389 923 389C945 389 956 408 961 425L973 477L984 530C991 560 1000 575 1020 597L1266 852C1272 858 1276 872 1277 903L963 903Z';
		const inner = 'M886 610L886 440C886 413 901 392 923 392C944 392 954 410 958 425L970 477L981 530C988 561 998 576 1018 598L1264 853C1270 860 1274 875 1275 903';
		const bub = {
			tan: [[888, 385], [914, 393], [922, 430], [990, 481], [903, 519], [1012, 557], [1155, 712], [943, 752], [1253, 867], [1258, 898]],
			end: [[898, 412], [935, 412], [885, 428], [959, 428], [983, 898], [1267, 918]],
			eq: [[979, 438], [938, 514]],
			par: [[933, 493], [995, 501], [1152, 741], [1187, 745]],
			q: [[979, 534], [1013, 594]]
		};
		const uses = Object.keys(bub).map(k => bub[k].map(p => `<use href="#b-${k}" x="${p[0]}" y="${p[1]}"/>`).join('')).join('');
		const dots = [[884, 610], [961, 538], [999, 607], [903, 428], [936, 425], [1268, 856], [1276, 891], [1106, 505], [1276, 903], [965, 902]];
		// model-space text is tall and narrow, so it is fitted to a measured length
		const t = (x, y, s, c, sz, len, extra = '') => `<text x="${x}" y="${y}" fill="${c}" font-family="Liberation Sans,sans-serif" font-size="${sz}" textLength="${len}" lengthAdjust="spacing" ${extra}>${s}</text>`;
		const tools = [
			`<rect x="2" y="2" width="18" height="20" fill="#eef1f2" stroke="#aaa"/><circle cx="11" cy="11" r="6" fill="#dff0f8" stroke="#1d7fae" stroke-width="1.500"/><path d="M15 15l6 7" stroke="#999" stroke-width="2.500"/>`,
			`<circle cx="10" cy="10" r="7" fill="#e4f2f9" stroke="#1d7fae" stroke-width="1.800"/><path d="M10 6v8M6 10h8" stroke="#1d7fae" stroke-width="2"/><path d="M15 15l7 7" stroke="#999" stroke-width="2.800"/>`,
			`<circle cx="10" cy="10" r="7" fill="#e4f2f9" stroke="#1d7fae" stroke-width="1.800"/><path d="M6 10h8" stroke="#1d7fae" stroke-width="2"/><path d="M15 15l7 7" stroke="#999" stroke-width="2.800"/>`,
			`<rect x="2" y="2" width="20" height="20" fill="#6aa8c4" stroke="#888"/><path d="M2 2h20c-5 5-12 11-14 20H2z" fill="#f4f6f7"/>`,
			`<path d="M2 7h14v15H2z" fill="#fff" stroke="#0d5f86" stroke-width="1.600"/><path d="M2 7l5-5h15l-6 5zM16 7l6-5v15l-6 5z" fill="#fff" stroke="#0d5f86" stroke-width="1.600"/><path d="M24 24v-3l-3 3z" fill="#444"/>`,
			`<path d="M2 10l6-8h9l3 8-9 9z" fill="#a6dcf2" stroke="#3d8fb5"/><path d="M8 2l3 8v9M2 10h18" stroke="#3d8fb5" fill="none"/><path d="M15 12h7v10h-7z" fill="#fff" stroke="#555"/><path d="M17 15h3M17 18h3" stroke="#555"/>`,
			`<rect x="1" y="2" width="18" height="19" fill="#fff" stroke="#aaa"/><path d="M1 7h18M1 12h18M1 17h18M7 2v19M13 2v19" stroke="#bbb"/><rect x="11" y="13" width="12" height="9" rx="1" fill="#444"/><circle cx="17" cy="17.500" r="3" fill="#fff"/><circle cx="17" cy="17.500" r="1.500" fill="#444"/>`,
			`<path d="M4 7h11v15H4z" fill="#d8eefa" stroke="#7fb8d2"/><path d="M4 7l4-4h8l-1 4zM15 7l1-4v15l-1 4z" fill="#eef7fb" stroke="#7fb8d2"/><path d="M24 14h-6l3-3M18 14l3 3" stroke="#333" stroke-width="1.600" fill="none"/>`,
			`<path d="M3 9h11v14H3z" fill="#e2f2fa" stroke="#7fb8d2"/><path d="M3 9l4-3h11l-4 3zM14 9l4-3v14l-4 3z" fill="#f2f9fc" stroke="#7fb8d2"/><path d="M11 0v6M9 3l2 3 2-3" stroke="#333" fill="none"/><path d="M24 14h-6M21 11l-3 3 3 3" stroke="#333" fill="none" stroke-width="1.400"/>`,
			`<path d="M3 2l3 3M6 2l-3 3M14 2l-3 6M7 12l-2 5M3 22l2-4" stroke="${R}" stroke-width="1.400"/><path d="M14 12v9M14 21l7-1M14 21l-5 2" stroke="${R}" stroke-width="1.400" fill="none"/><path d="M12 13l2-3 2 3zM19 18l4 2-4 2z" fill="${R}"/><path d="M24 24v-3l-3 3z" fill="#444"/>`,
			`<path d="M7 4h14l-5 14H2z" fill="none" stroke="${R}" stroke-width="1.600"/>${eye(18, 20)}`,
			`<path d="M12 2l-3 8M8 13l-3 8" stroke="${R}" stroke-width="1.600"/>${eye(17, 18)}`,
			`<path d="M3 4l4 4M7 4l-4 4M13 2l4 4M17 2l-4 4M16 8l4 4M20 8l-4 4M3 14l4 4M7 14l-4 4" stroke="${R}" stroke-width="1.300"/>${eye(18, 20)}`,
			`<path d="M10 2v13M10 15l8-1M10 15l-7 5" stroke="${R}" stroke-width="1.500" fill="none"/><path d="M8 4l2-4 2 4zM1 18v5h5z" fill="${R}"/>${eye(18, 18)}`,
			`<path d="M14 2h7v14h-5" fill="none" stroke="#555"/><path d="M4 6h6V3l5 4-5 4V8H4z" fill="#333"/><rect x="1" y="12" width="11" height="7" fill="#8ccbe9" stroke="#2e86b3"/><rect x="7" y="15" width="11" height="7" fill="#5fb2dc" stroke="#2e86b3"/>`,
			`<path d="M2 8h15v14H2z" fill="#e6f3f9" stroke="#8ab"/><path d="M2 8l6-6h15l-6 6zM17 8l6-6v14l-6 6z" fill="#cfe7f3" stroke="#8ab"/><path d="M2 18h15v4H2z" fill="#e2e6e7"/>`,
			`<path d="M2 6l7-4h14v14l-7 6H5z" fill="#9fcfe3" stroke="#7aa"/><path d="M7 8l5-3h9v10l-5 4H9z" fill="#d8eef7" stroke="#7aa"/><path d="M2 6l5 2M5 22l4-3M16 19l0 3M23 2l-2 3" stroke="#7aa"/>`,
			`<path d="M2 1v16M21 1v16M2 4h19" stroke="#333" fill="none"/><path d="M6 2L2 4l4 2zM17 2l4 2-4 2z" fill="#333"/><path d="M11 8v7M6 15h10" stroke="${B}" stroke-width="1.800"/><circle cx="3" cy="20" r="1.500" fill="#fff" stroke="#777"/>${eye(15, 20)}<path d="M24 24v-3l-3 3z" fill="#444"/>`,
			`<rect x="1" y="1" width="20" height="17" fill="none" stroke="${B}" stroke-dasharray="6 1" stroke-width="1.400"/><rect x="6" y="6" width="11" height="11" fill="#4fb3e2" stroke="#1d7fae"/><circle cx="20" cy="6" r="1.500" fill="#fff" stroke="#777"/>${eye(13, 19)}<path d="M24 24v-3l-3 3z" fill="#444"/>`,
			`<rect x="1" y="1" width="14" height="11" fill="#fbf1d6" stroke="#999"/><path d="M15 8h6l-3 8" fill="none" stroke="#333" stroke-width="1.300"/>${eye(15, 20)}`,
			`<path d="M5 3l8 9-8 9M13 12h8" fill="none" stroke="#555" stroke-width="1.300"/><circle cx="5" cy="4" r="3.500" fill="#9ac08a" stroke="#6a9"/><circle cx="21" cy="12" r="3.500" fill="#e27b72" stroke="#b55"/><circle cx="5" cy="20" r="3.500" fill="#7fb8d8" stroke="#58a"/>`
		];
		this.attachShadow({ mode: 'open' }).innerHTML = `<style>
			:host { display: block; position: relative; flex: 1; height: 832px; background: ${C}; overflow: hidden; }
			svg.scene { position: absolute; left: 0; top: 0; display: block; }
			.mini { position: absolute; left: 489px; top: 7px; width: 639px; height: 35px; box-sizing: border-box; background: #f7f9fa; border: 2px solid #b9bcbe; display: flex; align-items: center; padding-left: 1px; }
			.mini span { display: flex; align-items: center; justify-content: center; flex: 0 0 30.2px; height: 26px; box-sizing: border-box; }
			.mini .on { background: #d9dcdd; border: 1px solid #b4b8ba; flex-basis: 27px; margin: 0 1.600px; }
			.hand { position: absolute; left: 1588px; top: 635px; width: 30px; height: 42px; background: #0f0f0f; border-radius: 5px 0 0 5px; display: flex; align-items: center; justify-content: center; }
		</style>
		<svg class="scene" width="1616" height="832" viewBox="304 170 1616 832">
			<defs>
				<radialGradient id="bg"><stop offset=".65" stop-color="#f4f4f4"/><stop offset="1" stop-color="#d6d6d6"/></radialGradient>
				<linearGradient id="strip"><stop offset="0" stop-color="#7f8ed8"/><stop offset=".45" stop-color="#bcc8fa"/><stop offset="1" stop-color="#6b7ab8"/></linearGradient>
				<g id="b-tan"><circle r="8" fill="url(#bg)"/><path d="M-6 5C-6 -2 -1 -6 5 -6M-2 6C-2 1 0 -2 5 -3" fill="none" stroke="#555" stroke-width="1.200"/><circle cx="2" cy="1" r="1" fill="#555"/><circle cx="1" cy="5" r="1" fill="#555"/></g>
				<g id="b-end"><circle r="8" fill="url(#bg)"/><path d="M-1 1L5 -5" stroke="#444" stroke-width="1.500"/><rect x="-5" y="0" width="4.500" height="4.500" fill="#bfe6f7" stroke="#2f9fdd"/></g>
				<g id="b-eq"><circle r="8" fill="url(#bg)"/><path d="M-5.500 -1.500H5.500M-5.500 1.500H5.500" stroke="#555" stroke-width="1.300"/></g>
				<g id="b-par"><circle r="8" fill="url(#bg)"/><path d="M-4 5L1 -5M-1 5L4 -5" stroke="#555" stroke-width="1.300"/></g>
				<g id="b-q"><circle r="8" fill="url(#bg)"/><circle cx="-1" cy="-1" r="4.500" fill="none" stroke="#555" stroke-width="1.200"/><rect x="1" y="1" width="4" height="4" fill="#bfe6f7" stroke="#2f9fdd"/></g>
			</defs>
			<!-- datum planes -->
			<path d="M304 903.500H1920" stroke="${O}" stroke-width="1.200" stroke-dasharray="11 5"/>
			<path d="M1121.500 170V1002" stroke="${O}" stroke-width="1.200" stroke-dasharray="11 6"/>
			<rect x="877.500" y="384.500" width="440" height="533" fill="none" stroke="${OB}" stroke-width="1.200"/>
			<!-- part -->
			<path d="${outline}" fill="#a1aefa"/>
			<path d="${outline}" fill="none" stroke="${O}" stroke-width="1.200" stroke-dasharray="6 2"/>
			<rect x="929" y="903" width="384" height="10" fill="url(#strip)"/>
			<path d="M929 903H1313M929 910H1313" stroke="#22242e" stroke-width="1"/>
			<path d="M929 912.500H1313" stroke="#5aa0e8" stroke-width="1"/>
			<circle cx="922" cy="428" r="18" fill="${C}"/>
			<path d="M1048 800C1048 788 1058 779 1072 779C1082 779 1088 783 1093 790L1154 880C1157 886 1155 892 1150 892H1052C1049 892 1048 890 1048 888Z" fill="${C}"/>
			<circle cx="1237" cy="875" r="18.500" fill="${C}"/>
			<path d="M1217 876H1273V894H1217Z" fill="#474a59"/>
			<path d="M1245 894H1310V912H1245Z" fill="#474a59" opacity=".95"/>
			${t(878, 384, 'FRONT', OB, 12, 34)}
			${t(1318, 903, 'TOP', OB, 12, 19)}
			${t(1123, 917, 'RIGHT', OB, 12, 32)}
			<!-- sketch lines -->
			<path d="${inner}" fill="none" stroke="${Y}" stroke-width="1.700"/>
			<path d="M886 610L965 903" stroke="${Y}" stroke-width="1.700"/>
			<path d="M937 423L962 538" stroke="${Y}" stroke-width="3"/>
			<path d="M962 538C972 570 985 590 999 607L1247 864" fill="none" stroke="${Y}" stroke-width="1.500"/>
			<circle cx="921" cy="428" r="18" fill="none" stroke="${Y}" stroke-width="2"/>
			<path d="M921 419V424M921 432V437M912 428H917" stroke="${Y}" stroke-width="2"/>
			<path d="M1237 903H1320" stroke="${Y}" stroke-width="1.200"/>
			<path d="M1106 495V515M1096 505H1116" stroke="${Y}" stroke-width="2"/>
			<!-- dimension 50.00 -->
			<path d="M928 451H967V469H928Z" fill="#474a59"/>
			<path d="M907 471L1004 449" stroke="${Y}" stroke-width="1"/>
			<path d="M932 465L941 463L933 468Z" fill="${RED}" stroke="${RED}" stroke-width="1.500"/>
			<path d="M976 455L968 456L976 458Z" fill="${Y}" stroke="${Y}" stroke-width="1.500"/>
			${t(936, 465, '50.00', Y, 12, 38)}
			${t(990, 430, '1', Y, 12, 6)}
			${t(1004, 494, '2', Y, 12, 7)}
			${t(944, 488, '2', '#e8e87a', 11, 6, 'opacity=".6"')}
			${t(950, 510, '1', '#e8e87a', 11, 6, 'opacity=".6"')}
			<path d="M1165.500 723V733M1199.500 728V737" stroke="${Y}" stroke-width="1"/>
			<!-- dimension 148.96 -->
			<path d="M1249.500 828V942" stroke="#4aa8e0" stroke-width="1"/>
			<path d="M1249 915V917" stroke="#4aa8e0" stroke-width="6"/>
			${t(1230, 891, '148.96', '#4aa8e0', 12, 40)}
			<path d="M1244 855H1254M1249 855V864" stroke="${RED}" stroke-width="2"/>
			<path d="M1245 860V871" stroke="${RED}" stroke-width="1.500"/>
			<path d="M1264 903H1270" stroke="${RED}" stroke-width="2"/>
			${t(1285, 907, '00', Y, 11, 13, 'font-weight="bold"')}
			<path d="M1283 903H1292" stroke="${Y}" stroke-width="2"/>
			<!-- red points -->
			<rect x="961" y="898" width="8" height="8" fill="${RED}"/>
			<rect x="1271" y="899" width="8" height="8" fill="${RED}"/>
			<path d="M933 422H941V431M933 422V430" fill="none" stroke="${RED}" stroke-width="2"/>
			<circle cx="938" cy="436" r="3.500" fill="none" stroke="${RED}" stroke-width="2"/>
			<path d="M930 436H948M938 428V444" stroke="${RED}" stroke-width="2"/>
			${dots.map(d => `<circle cx="${d[0]}" cy="${d[1]}" r="2" fill="${DB}"/>`).join('')}
			${uses}
			<g transform="translate(1106 488)"><circle r="8" fill="url(#bg)"/><circle r="5" fill="none" stroke="#888"/><rect x="-2.500" y="-2.500" width="5" height="5" fill="#bfe6f7" stroke="#2f9fdd"/></g>
		</svg>
		<div class="mini">${tools.map((s, i) => `<span class="${i === 10 ? 'on' : ''}"><svg width="24" height="24" viewBox="0 0 24 24">${s}</svg></span>`).join('')}</div>
		<div class="hand"><svg width="14" height="20" viewBox="0 0 14 20"><path d="M3 1h8v4H3zM1 5h12v9a6 5 0 0 1-12 0z" fill="none" stroke="#f5a81c" stroke-width="1.200"/><path d="M5 3h1M8 3h1" stroke="#f5a81c"/></svg></div>`;
	}
}

class StatusBar extends HTMLElement {
	constructor() {
		super();
		this.attachShadow({ mode: 'open' }).innerHTML = `<style>
			:host { display: flex; align-items: center; height: 37px; box-sizing: border-box; border-top: 1px solid #c4c8c9; background: #f7f9fa; flex: none; padding-left: 6px; position: relative; }
			.b { display: flex; align-items: center; justify-content: center; width: 22px; height: 24px; box-sizing: border-box; flex: none; margin: 4px 4px 0 0; }
			.on { background: #dcdfe0; border: 1px solid #b4b8ba; }
			.v { width: 1px; height: 28px; background: #c0c4c5; flex: none; }
			.msg { display: flex; align-items: center; gap: 1px; margin: -3px 0 0 4px; font-size: 11px; color: #444; }
			.sp { flex: 1; }
			.bino { display: flex; width: 42px; height: 24px; box-sizing: border-box; border: 1px solid #b4b8ba; margin: 0 2px; }
			.bino span { display: flex; align-items: center; justify-content: center; }
			.drop { display: flex; align-items: center; box-sizing: border-box; width: 177px; height: 25px; border: 1px solid #b4b8ba; background: #f7f9fa; padding-left: 8px; margin: 0 18px 0 97px; position: relative; }
			.drop i { position: absolute; right: 14px; top: 0; bottom: 0; border-left: 1px solid #b4b8ba; }
		</style>
		<span class="b on"><svg width="18" height="20" viewBox="0 0 18 20"><rect x="1" y="2" width="15" height="16" fill="#fff" stroke="#888"/><rect x="1" y="2" width="15" height="3" fill="#ddd" stroke="#888"/><rect x="1" y="5" width="4" height="13" fill="#a8dcf2" stroke="#1d7fae"/>${eye(13, 15)}</svg></span>
		<span class="b"><svg width="18" height="20" viewBox="0 0 18 20"><circle cx="10" cy="9" r="7" fill="#7fc4e8" stroke="#2e86b3"/><path d="M1 17C4 18 14 10 17 3" fill="none" stroke="#555" stroke-width="1.200"/><path d="M6 5c3 2 6 4 8 7" stroke="#fff" fill="none"/></svg></span>
		<span class="b" style="margin-right:9px"><svg width="16" height="18" viewBox="0 0 16 18"><rect x="1" y="1" width="14" height="16" fill="#eef5f9" stroke="#2e86b3" stroke-width="1.300"/></svg></span>
		<span class="v"></span>
		<span class="msg"><svg width="12" height="14" viewBox="0 0 12 14"><path d="M0 4h6V0l6 7-6 7v-4H0z" fill="#4fb3e2" stroke="#2a5f80" stroke-width=".8"/></svg>选择要偏移的图元或边。</span>
		<span class="sp"></span>
		<span class="v"></span><span style="width:29px"></span><span class="v"></span><span style="width:3px"></span><span class="v"></span>
		<span class="bino"><span style="width:27px"><svg width="18" height="16" viewBox="0 0 18 16"><path d="M3 2h4v3h4V2h4l3 12h-6V8H6v6H0z" fill="#555"/><path d="M3 2h4v3H3zM11 2h4v3h-4z" fill="#222"/><path d="M0 14h6v1H0zM12 14h6v1h-6z" fill="#222"/></svg></span><span style="flex:1;border-left:1px solid #b4b8ba"><svg width="8" height="5" viewBox="0 0 8 5"><path d="M0 0h8L4 4.500z" fill="#666"/></svg></span></span>
		<span class="v"></span>
		<span class="drop">全部<i></i></span>`;
	}
}

class TaskBar extends HTMLElement {
	constructor() {
		super();
		const cube = `<svg width="20" height="22" viewBox="0 0 20 22"><path d="M1 5l3-4h15v15l-3 5H1z" fill="#f6e3b4" stroke="#d6c08a" stroke-width=".7"/><path d="M5 1h14v15H5z" fill="#a6dff5" stroke="#7cc0dc" stroke-width=".6"/></svg>`;
		this.attachShadow({ mode: 'open' }).innerHTML = `<style>
			:host { display: flex; align-items: center; height: 41px; background: linear-gradient(90deg, #cde5ed, #cfe5ee 50%, #d4dcea); flex: none; color: #111; font-size: 13px; }
			.s { display: flex; align-items: center; justify-content: center; width: 48px; flex: none; }
			.app { display: flex; align-items: center; box-sizing: border-box; height: 41px; border-bottom: 3px solid #0a78c8; padding: 3px 0 0 10px; gap: 5px; flex: none; white-space: nowrap; }
			.tray { display: flex; align-items: center; margin-left: auto; padding-right: 19px; }
			.tray span { display: flex; justify-content: center; align-items: center; width: 24px; flex: none; }
			.clock { text-align: center; width: 88px; font-size: 13px; line-height: 19px; }
		</style>
		<div class="s"><svg width="16" height="16" viewBox="0 0 16 16"><path d="M0 0h7.500v7.500H0zM8.500 0H16v7.500H8.500zM0 8.500h7.500V16H0zM8.500 8.500H16V16H8.500z" fill="#000"/></svg></div>
		<div class="s"><svg width="18" height="18" viewBox="0 0 18 18"><circle cx="11" cy="7" r="5.500" fill="none" stroke="#111" stroke-width="1.200"/><path d="M7 11l-5 6" stroke="#111" stroke-width="1.400"/></svg></div>
		<div class="s" style="width:53px"><svg width="18" height="24" viewBox="0 0 18 24"><rect width="18" height="24" rx="1" fill="#3c4245"/><rect x="2.500" y="3" width="13" height="5" fill="#99a"/><path d="M3 11h3v2H3zM7.500 11h3v2h-3zM12 11h3v2h-3zM3 15h3v2H3zM7.500 15h3v2h-3zM12 15h3v2h-3zM3 19h3v2H3zM7.500 19h3v2h-3zM12 19h3v2h-3z" fill="#ddd"/></svg></div>
		<div class="s" style="width:48px"><svg width="25" height="25" viewBox="0 0 25 25"><path d="M12 1c6 0 12 4 12 10 0 4-3 6-7 6-3 0-4-1-4-2 0-2 4-1 4-5 0-3-3-5-7-5C5 5 1 8 0 11 1 5 6 1 12 1z" fill="#3ac6a8"/><path d="M0 11C0 5 5 4 9 5 6 6 5 9 5 13c0 6 5 10 11 11-1 0-3 1-4 1C5 25 0 19 0 11z" fill="#0f6dc0"/><path d="M5 13c0 6 5 10 11 11 3 0 6-2 8-5-3 2-8 2-11-1-2-2-2-3 0-3-3 0-8-3-8-2z" fill="#1599d6"/></svg></div>
		<div class="app" style="width:160px;background:#e8f2f6">${cube}<span style="margin-left:3px">ZQ2150S6-00-00-...</span></div>
		<div class="app" style="width:152px;margin-left:4px">${cube}<span>类型</span></div>
		<div class="tray">
			<span><svg width="14" height="8" viewBox="0 0 14 8"><path d="M1 7l6-6 6 6" fill="none" stroke="#111" stroke-width="1.200"/></svg></span>
			<span><svg width="12" height="20" viewBox="0 0 12 20"><rect x="2" y="1" width="8" height="4" fill="#ddd" stroke="#777"/><path d="M1 5h10v10a5 4 0 0 1-10 0z" fill="#f2a33a" stroke="#888"/></svg></span>
			<span><svg width="16" height="20" viewBox="0 0 16 20"><path d="M1 2l7-1 7 1v9c0 4-4 7-7 8-3-1-7-4-7-8z" fill="#f7a61c"/><path d="M8 5c2 3 4 5 4 7a4 4 0 0 1-8 0c0-2 2-2 2-4 1 1 2 0 2-3z" fill="#fff"/></svg></span>
			<span><svg width="18" height="16" viewBox="0 0 18 16"><path d="M5 1h12v10H9v3h3M1 5h5v6H1z" fill="none" stroke="#111"/></svg></span>
			<span><svg width="18" height="16" viewBox="0 0 18 16"><path d="M1 5h3l4-4v14l-4-4H1z" fill="none" stroke="#111"/><path d="M10 5c1 2 1 4 0 6M13 3c2 3 2 7 0 10" fill="none" stroke="#111"/></svg></span>
			<span style="width:20px;color:#777">苏</span>
			<span style="margin-left:7px;width:24px"><span style="background:#0e8fe0;color:#fff;width:16px;height:16px;font:11px 'Liberation Sans'">du</span></span>
			<div class="clock"><div>11:40</div><div>2022/5/14</div></div>
			<span style="width:26px"><svg width="16" height="15" viewBox="0 0 16 15"><path d="M1 1h14v11H8l-3 3v-3H1z" fill="none" stroke="#111"/></svg></span>
		</div>`;
	}
}

class SelectDialog extends HTMLElement {
	constructor() {
		super();
		const radio = (t, on) => `<div class="r"><span class="c">${on ? '<i></i>' : ''}</span>${t}</div>`;
		this.attachShadow({ mode: 'open' }).innerHTML = `<style>
			:host { position: absolute; left: 1664px; top: 101px; width: 92px; height: 166px; box-sizing: border-box; background: #eff1f3; border: 1px solid #fff; box-shadow: 0 1px 4px rgba(0,0,0,.45); font-size: 12px; color: #444; display: flex; flex-direction: column; }
			.cap { display: flex; align-items: center; justify-content: flex-end; height: 31px; background: #e5e7e8; color: #b0b3b5; margin: 1px 1px 0; padding-right: 10px; gap: 13px; flex: none; }
			.cap b { color: #aaadaf; font: bold 13px 'Liberation Sans'; }
			fieldset { margin: 3px 3px 0; padding: 6px 0 0 11px; width: 84px; min-width: 0; height: 91px; box-sizing: border-box; border: 1px solid #b8bcbe; flex: none; position: relative; }
			legend { padding: 0 3px; margin-left: 6px; font-size: 12px; line-height: 12px; white-space: nowrap; color: #333; }
			.r { display: flex; align-items: center; height: 21px; gap: 7px; }
			.c { display: flex; align-items: center; justify-content: center; box-sizing: border-box; width: 12px; height: 12px; border: 1px solid #666; border-radius: 50%; background: #fff; }
			.c i { width: 6px; height: 6px; border-radius: 50%; background: #333; }
			.btn { display: flex; align-items: center; justify-content: center; margin: 9px auto 0; width: 76px; height: 25px; box-sizing: border-box; border: 1px solid #b0b4b6; background: #f7f9fa; }
		</style>
		<div class="cap"><span>类型</span><b>X</b></div>
		<fieldset><legend>选择偏移边</legend>${radio('单一(S)', 1)}${radio('链(H)')}${radio('环(L)')}</fieldset>
		<div class="btn">关闭(C)</div>`;
	}
}

class ImeBar extends HTMLElement {
	constructor() {
		super();
		const g = '#22c55e';
		this.attachShadow({ mode: 'open' }).innerHTML = `<style>
			:host { position: absolute; left: 1707px; top: 973px; width: 210px; height: 27px; box-sizing: border-box; border: 2px solid #2ab95a; background: #fff; display: flex; align-items: center; padding-left: 0; color: ${g}; }
			span { display: flex; justify-content: center; align-items: center; width: 26px; flex: none; }
			b { font: bold 15px 'Noto Sans CJK SC',sans-serif; }
		</style>
		<span><svg width="16" height="14" viewBox="0 0 16 14" fill="${g}"><ellipse cx="8" cy="10" rx="5" ry="4"/><circle cx="2" cy="6" r="1.800"/><circle cx="5.500" cy="2.500" r="1.800"/><circle cx="10.500" cy="2.500" r="1.800"/><circle cx="14" cy="6" r="1.800"/></svg></span>
		<span><b>中</b></span>
		<span><svg width="16" height="14" viewBox="0 0 16 14"><circle cx="3.500" cy="3" r="2" fill="none" stroke="${g}" stroke-width="1.500"/><path d="M12 7c2 0 2 3 0 6l-2 1c1-1 2-3 1-4-1-2 0-3 1-3z" fill="${g}"/></svg></span>
		<span><svg width="17" height="15" viewBox="0 0 17 15"><path d="M2 1h10v8H2zM12 2h3v4h-3M0 13h14" fill="none" stroke="${g}" stroke-width="1.700"/></svg></span>
		<span><svg width="16" height="14" viewBox="0 0 16 14"><path d="M12 1c2 6-3 11-11 10 3 3 13 4 14-5 0-2-1-4-3-5z" fill="${g}"/></svg></span>
		<span><svg width="17" height="13" viewBox="0 0 17 13"><rect x="1" y="1" width="15" height="11" fill="none" stroke="${g}" stroke-width="1.500"/><path d="M3 4h11M3 6.500h11M5 9h7" stroke="${g}" stroke-dasharray="1.500 1" stroke-width="1.200"/></svg></span>
		<span><svg width="14" height="15" viewBox="0 0 14 15"><circle cx="7" cy="5" r="4" fill="none" stroke="#bdf0d0" stroke-width="1.500"/><path d="M1 15c0-4 3-6 6-6s6 2 6 6" fill="none" stroke="#bdf0d0" stroke-width="1.500"/></svg></span>
		<span><svg width="15" height="15" viewBox="0 0 15 15" fill="none" stroke="${g}" stroke-width="1.700"><rect x="1" y="1" width="5" height="5" rx="1"/><rect x="9" y="1" width="5" height="5" rx="1"/><rect x="1" y="9" width="5" height="5" rx="1"/><rect x="9" y="9" width="5" height="5" rx="1"/></svg></span>`;
	}
}

class ForumMark extends HTMLElement {
	constructor() {
		super();
		this.attachShadow({ mode: 'open' }).innerHTML = `<style>
			:host { position: absolute; left: 1733px; top: 995px; width: 180px; height: 85px; pointer-events: none; font-family: 'Noto Sans CJK SC',sans-serif; }
			.w { display: flex; align-items: center; position: absolute; left: 0; top: 18px; font-size: 40px; font-weight: 300; line-height: 48px; white-space: nowrap; }
			.o { color: #f0683a; }
			.k { color: #161616; margin-left: 8px; }
			.u { position: absolute; left: 4px; top: 60px; font: italic 14.500px 'Liberation Sans',sans-serif; letter-spacing: 1.100px; color: rgba(70,70,70,.85); white-space: nowrap; }
			svg { position: absolute; left: 38px; top: 0; }
		</style>
		<div class="w"><span class="o">野火</span><span class="k">论坛</span></div>
		<svg width="50" height="60" viewBox="0 0 50 60"><path d="M28 0C36 8 36 18 30 28 26 38 14 52 5 58 16 44 25 30 30 18 32 12 31 6 28 0z" fill="#f0683a"/></svg>
		<div class="u">www.proewildfire.cn</div>`;
	}
}

customElements.define('creo-window', CreoWindow);
customElements.define('title-bar', TitleBar);
customElements.define('ribbon-tabs', RibbonTabs);
customElements.define('ribbon-bar', RibbonBar);
customElements.define('ribbon-group', RibbonGroup);
customElements.define('rb-col', RbCol);
customElements.define('rb-item', RbItem);
customElements.define('rb-big', RbBig);
customElements.define('inspect-tools', InspectTools);
customElements.define('main-area', MainArea);
customElements.define('tree-row', TreeRow);
customElements.define('model-tree', ModelTree);
customElements.define('graphics-view', GraphicsView);
customElements.define('status-bar', StatusBar);
customElements.define('task-bar', TaskBar);
customElements.define('select-dialog', SelectDialog);
customElements.define('ime-bar', ImeBar);
customElements.define('forum-mark', ForumMark);
</script>
</body>
</html>
